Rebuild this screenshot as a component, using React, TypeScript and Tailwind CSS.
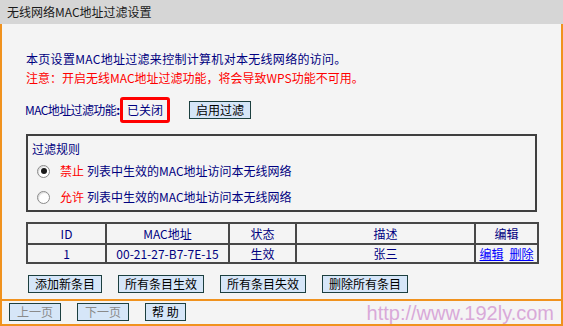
import React from "react";

const orange = "border-[#f0921e]";

function Btn({ children, dim, className = "" }: { children: React.ReactNode; dim?: boolean; className?: string }) {
  return (
    <button
      className={`h-[18px] shrink-0 border border-[#1c3f3f] bg-[#d6e6f8] px-[6px] text-[12px] leading-none flex items-center justify-center ${
        dim ? "text-[#8a8a8a]" : "text-black"
      } ${className}`}
    >
      {children}
    </button>
  );
}

function Radio({ checked }: { checked?: boolean }) {
  return (
    <span className="w-[13px] h-[13px] rounded-full border border-[#8a8a8a] bg-white flex items-center justify-center shadow-[inset_1px_1px_1px_rgba(0,0,0,0.15)]">
      {checked && <span className="w-[6px] h-[6px] rounded-full bg-[#1a1a1a]" />}
    </span>
  );
}

export default function App() {
  const rules = [
    { checked: true, word: "禁止" },
    { checked: false, word: "允许" },
  ];

  return (
    <div className="w-[563px] h-[326px] bg-[#f4f4f4] font-['Noto_Sans_CJK_SC',sans-serif] text-[12px] leading-none flex flex-col overflow-hidden">
      {/* Title bar */}
      <div className="h-[24px] shrink-0 bg-[#d6d6d6] flex items-center pl-[7px] text-[#1a1a1a] text-[12px]">
        无线网络MAC地址过滤设置
      </div>

      <div className={`flex-1 border-x-2 border-b-2 ${orange} flex flex-col`}>
        {/* Main content */}
        <div className="h-[275px] shrink-0 px-[24px] pt-[25px] text-[#000080]">
          <p className="leading-[19px] tracking-[0.3px]">本页设置MAC地址过滤来控制计算机对本无线网络的访问。</p>
          <p className="leading-[19px] text-[#ff0000]">注意：开启无线MAC地址过滤功能，将会导致WPS功能不可用。</p>

          <div className="mt-[10px] h-[26px] flex items-center">
            <span className="-ml-[1px] tracking-[-0.6px]">MAC地址过滤功能</span>
            <span className="font-bold">:</span>
            <span className="h-[26px] border-[3px] border-[#ff0000] rounded-[3px] px-[4px] flex items-center">已关闭</span>
            <Btn className="ml-[19px]">启用过滤</Btn>
          </div>

          {/* Filter rule box */}
          <div className="mt-[11px] h-[78px] border-2 border-[#3f3f3f] flex flex-col">
            <div className="mt-[3px] h-[20px] pl-[4px] flex items-center">过滤规则</div>
            {rules.map((r, i) => (
              <div key={r.word} className={`${i === 0 ? "mt-[2px]" : "mt-[6px]"} h-[20px] flex items-center pl-[9px]`}>
                <Radio checked={r.checked} />
                <span className="ml-[10px] text-[#ff0000]">{r.word}</span>
                <span className="ml-[3px]">列表中生效的MAC地址访问本无线网络</span>
              </div>
            ))}
          </div>

          {/* Entries table */}
          <table className="mt-[10px] w-full table-fixed border-collapse text-center">
            <colgroup>
              <col className="w-[79px]" />
              <col className="w-[123px]" />
              <col className="w-[67px]" />
              <col className="w-[179px]" />
              <col className="w-[63px]" />
            </colgroup>
            <thead>
              <tr className="h-[21px]">
                {["ID", "MAC地址", "状态", "描述", "编辑"].map((h) => (
                  <th key={h} className="border-2 border-[#474747] font-normal p-0">
                    {h}
                  </th>
                ))}
              </tr>
            </thead>
            <tbody>
              <tr className="h-[19px]">
                <td className="border-2 border-[#474747] p-0">1</td>
                <td className="border-2 border-[#474747] p-0">00-21-27-B7-7E-15</td>
                <td className="border-2 border-[#474747] p-0">生效</td>
                <td className="border-2 border-[#474747] p-0">张三</td>
                <td className="border-2 border-[#474747] p-0">
                  <span className="flex justify-center gap-[6px]">
                    <a className="text-[#0000ff] underline">编辑</a>
                    <a className="text-[#0000ff] underline">删除</a>
                  </span>
                </td>
              </tr>
            </tbody>
          </table>

          <div className="mt-[11px] ml-[2px] flex gap-[16px]">
            <Btn>添加新条目</Btn>
            <Btn>所有条目生效</Btn>
            <Btn>所有条目失效</Btn>
            <Btn>删除所有条目</Btn>
          </div>
        </div>

        {/* Footer */}
        <div className={`flex-1 border-t-2 ${orange} flex items-start pt-[2px] pl-[7px] pr-[7px]`}>
          <div className="flex gap-[16px]">
            <Btn dim className="px-[7px]">上一页</Btn>
            <Btn dim className="px-[7px]">下一页</Btn>
            <Btn className="px-[6px]">帮 助</Btn>
          </div>
          <span className="ml-auto font-['Liberation_Sans',Arial,sans-serif] text-[20px] leading-[20px] text-[#d9a9d9]">
            http://www.192ly.com
          </span>
        </div>
      </div>
    </div>
  );
}
